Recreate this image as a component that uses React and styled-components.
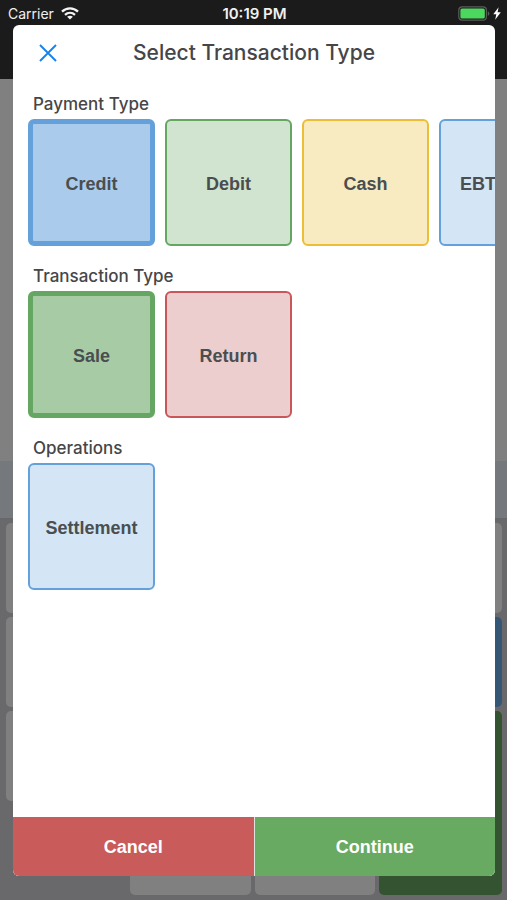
import React, { useState } from 'react';
import styled, { createGlobalStyle } from 'styled-components';

const GlobalStyle = createGlobalStyle`
  *, *::before, *::after {
    box-sizing: border-box;
  }
  body {
    margin: 0;
    font-family: Inter, "Liberation Sans", sans-serif;
    color: #464648;
  }
  button {
    margin: 0;
    padding: 0;
    border: 0;
    cursor: pointer;
  }
`;

const Screen = styled.div`
  position: relative;
  display: flex;
  flex-direction: column;
  min-height: 100vh;
  overflow: hidden;
  background: #808080;
`;

const StatusBar = styled.header`
  display: grid;
  grid-template-columns: 1fr auto 1fr;
  align-items: start;
  height: 79px;
  padding: 4px 6px 0 8px;
  background: #1b1b1b;
  color: #f0f0f0;
  font-size: 14px;
  line-height: 20px;
`;

const StatusGroup = styled.div`
  display: flex;
  align-items: center;
  gap: ${({ $gap }) => $gap}px;
  height: 19px;
  justify-content: ${({ $end }) => ($end ? 'flex-end' : 'flex-start')};
`;

const Clock = styled.time`
  font-size: 15px;
  font-weight: 600;
`;

const Amount = styled.div`
  flex: 1;
`;

const Summary = styled.div`
  height: 59px;
  background: #75797d;
  border-bottom: 2px solid #66686a;
`;

const Keypad = styled.div`
  display: grid;
  grid-template-columns: 1fr 1fr 1fr 123px;
  grid-auto-rows: 90px;
  gap: 4px;
  padding: 3px 5px 5px 6px;
  background: #69696c;
`;

const Key = styled.div`
  grid-column: ${({ $col }) => $col};
  grid-row: ${({ $row }) => $row};
  border-radius: 5px;
  background: ${({ $color }) => $color || '#808080'};
`;

const Overlay = styled.div`
  position: absolute;
  inset: 0;
  display: flex;
  padding: 25px 12px 24px 13px;
`;

const Modal = styled.section`
  display: flex;
  flex: 1;
  flex-direction: column;
  min-width: 0;
  border-radius: 6px;
  overflow: hidden;
  background: #fff;
`;

const ModalHeader = styled.div`
  display: grid;
  grid-template-columns: 40px 1fr 40px;
  align-items: center;
  height: 55px;
  padding: 0 15px;
`;

const CloseButton = styled.button`
  display: flex;
  align-items: center;
  justify-content: center;
  height: 40px;
  background: none;
`;

const Title = styled.h1`
  margin: 0;
  font-size: 21px;
  font-weight: 500;
  line-height: 28px;
  text-align: center;
  white-space: nowrap;
`;

const Body = styled.div`
  flex: 1;
  padding-top: 12px;
`;

const Group = styled.div`
  margin-bottom: 17px;
`;

const GroupName = styled.h2`
  margin: 0;
  padding: 0 20px 3px;
  font-size: 17px;
  font-weight: 500;
  line-height: 24px;
`;

const TileRow = styled.div`
  display: flex;
  gap: 10px;
  padding: 0 15px;
  margin-bottom: 18px;
  overflow-x: auto;
  scrollbar-width: none;
`;

const palette = {
  blue: { border: '#64a1da', light: '#d4e5f5', strong: '#aacbec' },
  green: { border: '#65a762', light: '#d1e4cf', strong: '#a7cca5' },
  yellow: { border: '#edbd36', light: '#f8ebc1', strong: '#f3d98a' },
  red: { border: '#c9575a', light: '#edcece', strong: '#e2a8a8' },
};

const Tile = styled.button`
  flex: 0 0 127px;
  height: 127px;
  padding-top: 3px;
  border: ${({ $selected }) => ($selected ? 5 : 2)}px solid
    ${({ $color }) => palette[$color].border};
  border-radius: 6px;
  background: ${({ $color, $selected }) =>
    $selected ? palette[$color].strong : palette[$color].light};
  color: #4a4e50;
  font-family: "Liberation Sans", Arial, sans-serif;
  font-size: 18px;
  font-weight: 700;
  white-space: nowrap;
`;

const Footer = styled.footer`
  display: flex;
  gap: 1px;
  background: #dfe3dd;
`;

const FooterButton = styled.button`
  flex: 1;
  height: 59px;
  padding-top: 2px;
  background: ${({ $color }) => $color};
  color: #fff;
  font-family: "Liberation Sans", Arial, sans-serif;
  font-size: 18px;
  font-weight: 700;
`;

const payments = [
  { name: 'Credit', color: 'blue' },
  { name: 'Debit', color: 'green' },
  { name: 'Cash', color: 'yellow' },
  { name: 'EBT Food', color: 'blue' },
];

const transactions = [
  { name: 'Sale', color: 'green' },
  { name: 'Return', color: 'red' },
];

const operations = [{ name: 'Settlement', color: 'blue' }];

const keys = [
  { row: '1', col: '1' },
  { row: '1', col: '2' },
  { row: '1', col: '3' },
  { row: '1', col: '4' },
  { row: '2', col: '1' },
  { row: '2', col: '2' },
  { row: '2', col: '3' },
  { row: '2', col: '4', color: '#355777' },
  { row: '3', col: '1' },
  { row: '3', col: '2' },
  { row: '3', col: '3' },
  { row: '3 / span 2', col: '4', color: '#345331' },
  { row: '4', col: '2' },
  { row: '4', col: '3' },
];

function TileGroup({ name, items, selected, onSelect }) {
  return (
    <Group>
      <GroupName>{name}</GroupName>
      <TileRow>
        {items.map((item) => (
          <Tile
            key={item.name}
            type="button"
            $color={item.color}
            $selected={item.name === selected}
            aria-pressed={item.name === selected}
            onClick={() => onSelect(item.name)}
          >
            {item.name}
          </Tile>
        ))}
      </TileRow>
    </Group>
  );
}

function WifiIcon() {
  return (
    <svg width="18" height="13" viewBox="0 0 18 13" fill="none" stroke="#f4f4f4" strokeWidth="2.3">
      <path d="M1 4.7C5.6.3 12.4.3 17 4.7" />
      <path d="M4 7.9c2.9-2.7 7.1-2.7 10 0" />
      <path d="M9 12.6 6.1 9.8c1.7-1.5 4.1-1.5 5.8 0z" fill="#f4f4f4" stroke="none" />
    </svg>
  );
}

function BatteryIcon() {
  return (
    <svg width="32" height="15" viewBox="0 0 32 15">
      <rect x=".8" y=".8" width="27.6" height="13.4" rx="3.4" fill="none" stroke="#5c5c5c" strokeWidth="1.2" />
      <rect x="2.4" y="2.4" width="24.4" height="10.2" rx="1.6" fill="#4cd75f" />
      <path d="M29.8 5.2c2 .8 2 3.8 0 4.6z" fill="#5c5c5c" />
    </svg>
  );
}

function BoltIcon() {
  return (
    <svg width="8" height="13" viewBox="0 0 8 13">
      <path d="M5.6.3.3 7.3h3L2.2 12.7 7.8 5.3H4.6z" fill="#fff" />
    </svg>
  );
}

export default function App() {
  const [payment, setPayment] = useState('Credit');
  const [transaction, setTransaction] = useState('Sale');
  const [operation, setOperation] = useState(null);

  return (
    <Screen>
      <GlobalStyle />

      <StatusBar>
        <StatusGroup $gap={7}>
          <span>Carrier</span>
          <WifiIcon />
        </StatusGroup>
        <Clock>10:19 PM</Clock>
        <StatusGroup $gap={3} $end>
          <BatteryIcon />
          <BoltIcon />
        </StatusGroup>
      </StatusBar>
      <Amount />
      <Summary />
      <Keypad>
        {keys.map((key) => (
          <Key key={key.row + key.col} $row={key.row} $col={key.col} $color={key.color} />
        ))}
      </Keypad>

      <Overlay>
        <Modal role="dialog" aria-label="Select Transaction Type">
          <ModalHeader>
            <CloseButton type="button" aria-label="Close">
              <svg width="18" height="18" viewBox="0 0 18 18" stroke="#1482f0" strokeWidth="1.9">
                <path d="M1 1l16 16M17 1L1 17" />
              </svg>
            </CloseButton>
            <Title>Select Transaction Type</Title>
          </ModalHeader>

          <Body>
            <TileGroup name="Payment Type" items={payments} selected={payment} onSelect={setPayment} />
            <TileGroup name="Transaction Type" items={transactions} selected={transaction} onSelect={setTransaction} />
            <TileGroup name="Operations" items={operations} selected={operation} onSelect={setOperation} />
          </Body>

          <Footer>
            <FooterButton type="button" $color="#c95b5b">Cancel</FooterButton>
            <FooterButton type="button" $color="#69aa63">Continue</FooterButton>
          </Footer>
        </Modal>
      </Overlay>
    </Screen>
  );
}
